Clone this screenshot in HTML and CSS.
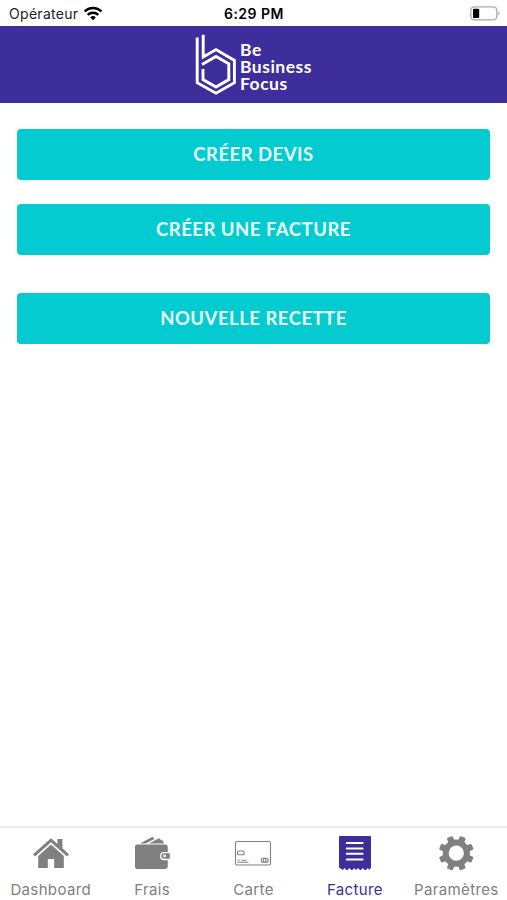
FILE: index.html
```html
<!DOCTYPE html>
<html lang="fr">

<head>
    <meta charset="UTF-8">
    <meta name="viewport" content="width=device-width, initial-scale=1.0">
    <title>Be Business Focus</title>
    <link rel="stylesheet" href="styles.css">
</head>

<body>
    <div class="status">
        <div class="carrier">
            <span>Opérateur</span>
            <svg class="wifi" width="20" height="15" viewBox="0 0 20 15" fill="none" stroke="#000" stroke-width="2.5">
                <path d="M1.6 5.4a12 12 0 0 1 16.8 0" />
                <path d="M4.7 8.8a7.7 7.7 0 0 1 10.6 0" />
                <path d="M10 14.3 7.2 11.4a4 4 0 0 1 5.6 0z" fill="#000" stroke="none" />
            </svg>
        </div>
        <time class="clock">6:29 PM</time>
        <svg class="battery" width="31" height="15" viewBox="0 0 31 15">
            <rect x=".8" y=".8" width="26" height="13" rx="3.5" fill="#fff" stroke="#aaa" stroke-width="1.3" />
            <rect x="3" y="2.7" width="6.2" height="9.2" rx="1" fill="#000" />
            <path d="M28.4 5q2.4 2.3 0 4.6z" fill="#aaa" />
        </svg>
    </div>
    <header class="header">
        <svg class="logo" width="42" height="62" viewBox="0 0 42 62" fill="none" stroke="#fff" stroke-width="2.9">
            <path d="M2.2 3.6V48.7L21 59.2 39.4 48.7V26.4L21 15.6 8.2 23V.8" />
            <path d="M8 35V45.6L21 53 33.8 45.6V29.8L21 22.4 7 30.4" />
        </svg>
        <h1 class="brand">Be<br>Business<br>Focus</h1>
    </header>
    <main class="content">
        <button class="btn">CRÉER DEVIS</button>
        <button class="btn">CRÉER UNE FACTURE</button>
        <button class="btn btn-recette">NOUVELLE RECETTE</button>
    </main>
    <nav class="tabs">
        <a class="tab">
            <svg width="38" height="36" viewBox="0 0 38 36" fill="#808080">
                <path d="M1 19.2 19 3.2l6.4 5.7V4h5v9.3L37 19.2l-2 2.2L19 7.2 3 21.4z" />
                <path d="M6.2 21 19 9.6 31.8 21v12H22.2v-9h-6.4v9H6.2z" />
            </svg>
            <span>Dashboard</span>
        </a>
        <a class="tab">
            <svg width="38" height="36" viewBox="0 0 38 36" fill="#808080">
                <path d="M7 8.6 18.6 2.2q1.2-.6 2 .5l.8 1.2-8.7 4.7zM16 8.6l8.8-4.8 2-.3 1.1 1.7 1.5.1 1.7 3.3z" />
                <path d="M4 9.6h28.5q2.3 0 2.3 2.5v4.8H31q-4 0-4 4.2t4 4.2h3.8v6.3q0 2.4-2.5 2.4H4.5Q2 34 2 31.4V11.6q0-2 2-2z" />
                <path d="M31 18.3h5.8v5.5H31q-2.7 0-2.7-2.8t2.7-2.7z" />
                <circle cx="31.6" cy="21" r="1.4" fill="#fff" />
            </svg>
            <span>Frais</span>
        </a>
        <a class="tab">
            <svg width="38" height="36" viewBox="0 0 38 36" fill="none" stroke="#808080" stroke-width="1.1">
                <rect x="1.5" y="6.5" width="35" height="23.5" rx="1.5" />
                <rect x="3.5" y="16" width="6.5" height="3.7" rx="1" />
                <path d="M3.5 25.3h2M7.5 25.3h5M3.5 27.2h11" />
                <rect x="27.2" y="23.3" width="7" height="4" rx="2" />
                <ellipse cx="30.7" cy="25.3" rx="1.3" ry="1.9" />
            </svg>
            <span>Carte</span>
        </a>
        <a class="tab tab-active">
            <svg width="38" height="36" viewBox="0 0 38 36">
                <path d="M3 2q0-1 1-1h30q1 0 1 1v30.5l-1.6 2.5-1.6-2-2 2h-1.2l-1.8-2-1.8 2h-1.2l-1.8-2-1.8 2H20l-1.8-2-1.8 2h-1.2l-1.8-2-1.8 2h-1.2l-1.8-2-1.8 2L3 32.5z" fill="#3d2e9c" />
                <path d="M10.8 8h15.8M10.8 13.5h15.8M10.8 18.8h15.8M10.8 24.4h15.8" stroke="#fff" stroke-width="2" stroke-linecap="round" />
            </svg>
            <span>Facture</span>
        </a>
        <a class="tab">
            <svg width="38" height="36" viewBox="0 0 38 36">
                <g transform="translate(19.3 18.2)" fill="#808080">
                    <circle r="10.6" fill="none" stroke="#808080" stroke-width="6" />
                    <g id="teeth">
                        <path id="tooth" d="M-3.3-12.5-3.1-16.5q.1-1 1-1h4.2q.9 0 1 1L3.3-12.5z" transform="rotate(22.5)" />
                        <use href="#tooth" transform="rotate(45)" />
                        <use href="#tooth" transform="rotate(90)" />
                        <use href="#tooth" transform="rotate(135)" />
                    </g>
                    <use href="#teeth" transform="rotate(180)" />
                </g>
            </svg>
            <span>Paramètres</span>
        </a>
    </nav>
</body>

</html>
```
FILE: styles.css
```css
* {
    box-sizing: border-box;
}

body {
    margin: 0;
    height: 100vh;
    display: flex;
    flex-direction: column;
    background: #fff;
    font-family: Inter, 'Liberation Sans', sans-serif;
    overflow: hidden;
}

.status {
    height: 26px;
    flex: none;
    display: grid;
    grid-template-columns: 1fr auto 1fr;
    align-items: center;
    padding: 1px 6px 0 9px;
    font-size: 14px;
    color: #222;
}

.carrier {
    display: flex;
    align-items: center;
    gap: 5px;
    letter-spacing: 0.3px;
}

.clock {
    margin-right: 2px;
    font-weight: 600;
    color: #000;
    letter-spacing: 0.5px;
}

.battery {
    justify-self: end;
}

.header {
    height: 77px;
    flex: none;
    display: flex;
    justify-content: center;
    gap: 3px;
    padding-top: 8px;
    background: #3d2e9c;
}

.brand {
    margin: 8px 0 0;
    font-family: Lato, sans-serif;
    font-size: 17.5px;
    font-weight: 700;
    line-height: 16.8px;
    letter-spacing: 0.5px;
    color: #fff;
}

.content {
    flex: 1;
    padding: 26px 17px 0;
}

.btn {
    display: block;
    width: 100%;
    height: 51px;
    margin: 0 0 24px;
    padding: 0 0 2px;
    border: none;
    border-radius: 4px;
    background: #04cbcf;
    color: #e9ffff;
    font-family: Lato, sans-serif;
    font-size: 18.5px;
    font-weight: 700;
    letter-spacing: 0.5px;
}

.btn-recette {
    margin-top: 38px;
}

.tabs {
    height: 74px;
    flex: none;
    display: grid;
    grid-template-columns: repeat(5, 1fr);
    border-top: 2px solid #ebebeb;
}

.tab {
    display: flex;
    flex-direction: column;
    align-items: center;
    padding-top: 7px;
    font-size: 15px;
    line-height: 20px;
    letter-spacing: 0.35px;
    color: #808080;
}

.tab span {
    margin-top: 9px;
}

.tab-active {
    color: #3d2e9c;
}
```
